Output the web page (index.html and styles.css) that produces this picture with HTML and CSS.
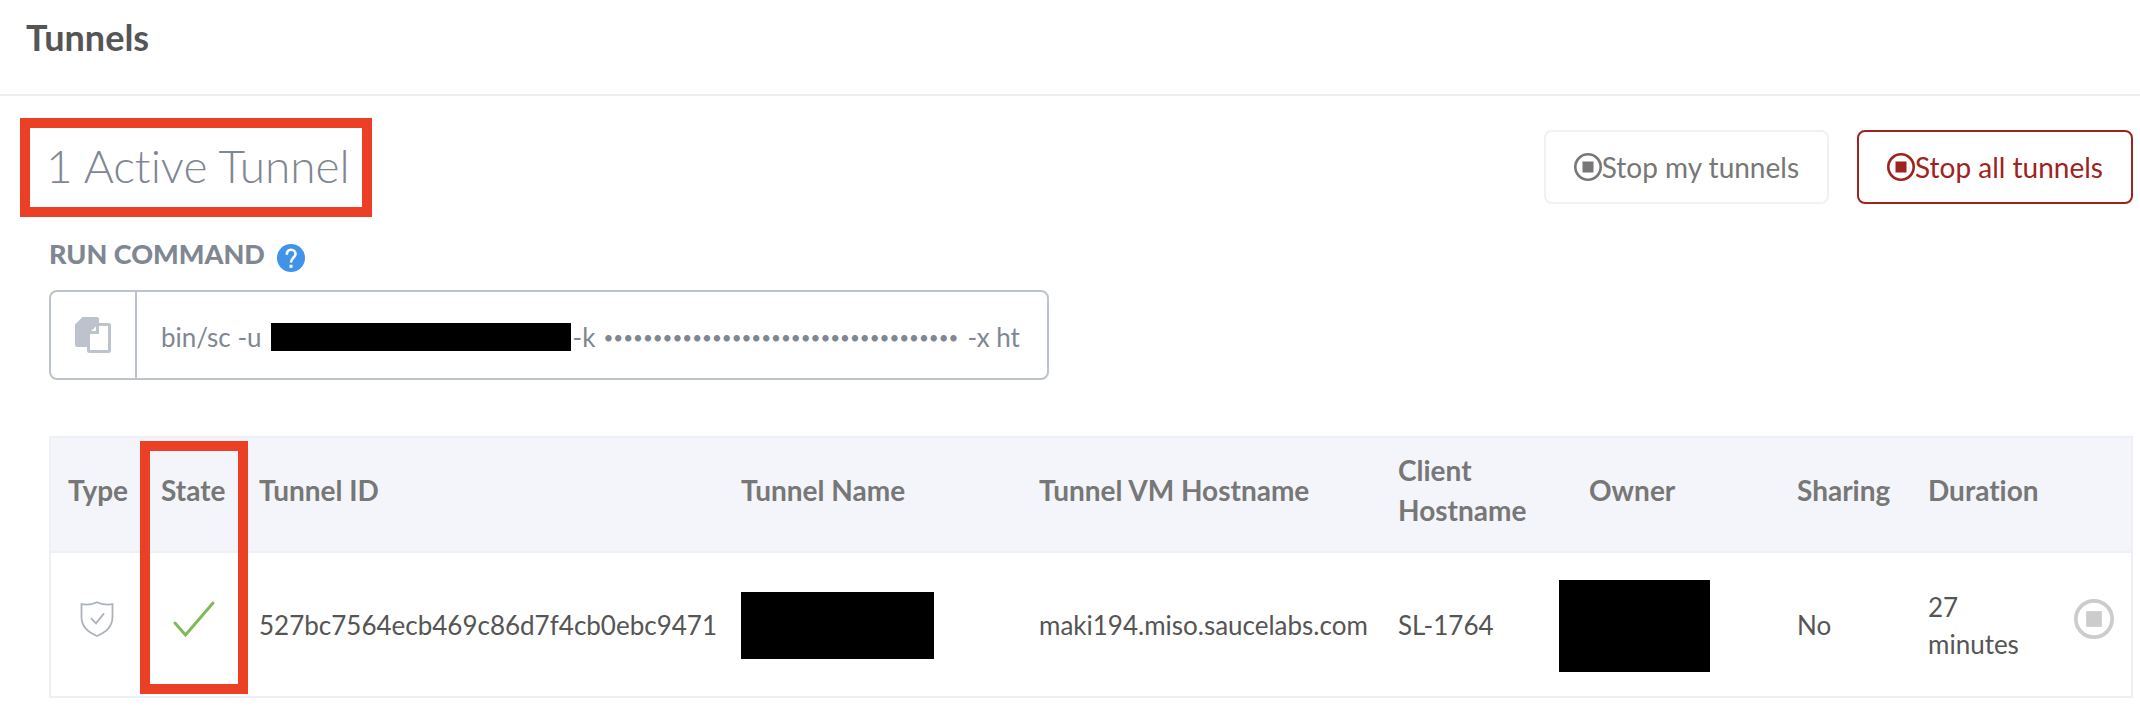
FILE: index.html
```html
<!DOCTYPE html>
<html lang="en">
<head>
<meta charset="utf-8">
<title>Tunnels</title>
<link rel="stylesheet" href="styles.css">
</head>
<body>
<svg class="sprite" aria-hidden="true">
  <symbol id="stop" viewBox="0 0 28 28">
    <circle cx="14" cy="14" r="12.7" fill="none" stroke="currentColor" stroke-width="2.6"/>
    <rect x="8.5" y="8.5" width="11" height="11" fill="currentColor"/>
  </symbol>
</svg>
<header class="page-header">
  <h1 class="page-title">Tunnels</h1>
</header>
<main class="content">
  <div class="summary">
    <h2 class="summary-title">1 Active Tunnel</h2>
    <div class="actions">
      <button class="button" type="button"><svg class="button-icon" aria-hidden="true"><use href="#stop"/></svg>Stop my tunnels</button>
      <button class="button button-danger" type="button"><svg class="button-icon" aria-hidden="true"><use href="#stop"/></svg>Stop all tunnels</button>
    </div>
  </div>
  <section class="command">
    <div class="command-heading">
      <h3 class="command-title">RUN COMMAND</h3>
      <button class="help" type="button" aria-label="Help">
        <svg class="help-icon" viewBox="0 0 28 28" aria-hidden="true">
          <circle cx="14" cy="14" r="14" fill="#3f94ea"/>
          <path d="M9.8 10.7C9.8 7.400 11.600 5.700 14 5.700s4.500 1.700 4.500 4.300c0 3.800-4.500 3.900-4.500 8.400" fill="none" stroke="#fff" stroke-width="2.600"/>
          <rect x="12.500" y="20.800" width="3" height="3" fill="#fff"/>
        </svg>
      </button>
    </div>
    <div class="command-box">
      <button class="copy" type="button" aria-label="Copy command">
        <svg class="copy-icon" viewBox="0 0 36 36" aria-hidden="true">
          <path d="M7.500 0H22a2 2 0 0 1 2 2V6h9.500A2.500 2.500 0 0 1 36 8.500v25A2.500 2.500 0 0 1 33.500 36h-19A2.500 2.500 0 0 1 12 33.500V30H2.500A2.500 2.500 0 0 1 0 27.500V7.500z" fill="#bcc3cc"/>
          <path d="M24 9h9v24H15V17h9z" fill="#fff"/>
          <path d="M16 14l5-4.500V14z" fill="#fff"/>
        </svg>
      </button>
      <div class="command-text"><span>bin/sc -u</span><span class="redacted redacted-user"></span><span>-k</span><span class="secret">••••••••••••••••••••••••••••••••••••</span><span>-x ht</span></div>
    </div>
  </section>
  <div class="table-wrap">
    <table class="tunnels">
      <colgroup><col class="col-type"><col class="col-state"><col class="col-id"><col class="col-name"><col class="col-vm"><col class="col-client"><col class="col-owner"><col class="col-sharing"><col class="col-duration"><col class="col-action"></colgroup>
      <thead>
        <tr><th class="type">Type</th><th>State</th><th>Tunnel ID</th><th>Tunnel Name</th><th>Tunnel VM Hostname</th><th>Client Hostname</th><th class="owner">Owner</th><th>Sharing</th><th>Duration</th><th></th></tr>
      </thead>
      <tbody>
        <tr>
          <td class="icon-cell">
            <svg class="shield-icon" viewBox="0 0 34 36" role="img" aria-label="Protected">
              <g fill="none" stroke="#adb3ba" stroke-width="1.800"><path d="M1.500 3.200C7 4.200 12 3.500 17 1.200c5 2.300 10 3 15.500 2V16c0 9.500-7 15.500-15.500 19C8.500 31.500 1.500 25.500 1.500 16z"/><path d="M11 17.200l5 5.200 8-10"/></g>
            </svg>
          </td>
          <td class="icon-cell">
            <svg class="check-icon" viewBox="0 0 44 38" role="img" aria-label="Running">
              <path d="M3 23l10.500 12L41 3" fill="none" stroke="#7fba57" stroke-width="3" stroke-linecap="round"/>
            </svg>
          </td>
          <td>527bc7564ecb469c86d7f4cb0ebc9471</td>
          <td><span class="redacted redacted-name"></span></td>
          <td>maki194.miso.saucelabs.com</td>
          <td>SL-1764</td>
          <td><span class="redacted redacted-owner"></span></td>
          <td>No</td>
          <td>27 minutes</td>
          <td class="icon-cell"><button class="stop" type="button" aria-label="Stop tunnel"><svg class="stop-icon" aria-hidden="true"><use href="#stop"/></svg></button></td>
        </tr>
      </tbody>
    </table>
    <div class="state-highlight"></div>
  </div>
</main>
</body>
</html>
```
FILE: styles.css
```css
* { box-sizing: border-box; }
body {
  margin: 0;
  background: #fff;
  color: #555;
  font-family: Lato, "Open Sans", sans-serif;
  font-size: 26px;
  font-variant-ligatures: none;
}
h1, h2, h3 { margin: 0; }
button {
  padding: 0;
  border: 0;
  background: none;
  color: inherit;
  font: inherit;
  font-variant-ligatures: none;
  cursor: pointer;
}
svg { display: block; flex: none; }
.sprite { position: absolute; width: 0; height: 0; }
.redacted { display: block; flex: none; background: #000; }

.page-header {
  padding: 17px 26px 37px;
  border-bottom: 2px solid #eee;
}
.page-title { font-size: 36px; font-weight: 700; line-height: 40px; }

.content { padding: 22px 7px 0 20px; }
.summary { display: flex; align-items: flex-start; justify-content: space-between; }
.summary-title {
  padding: 7px 12px 11px 16px;
  border: 10px solid #ec4026;
  color: #7f8792;
  font-size: 46px;
  font-weight: 300;
  line-height: 61px;
}
.actions { display: flex; gap: 28px; padding-top: 12px; }
.button {
  display: flex;
  align-items: center;
  height: 74px;
  padding: 0 28px;
  border: 2px solid #f1f1f1;
  border-radius: 8px;
  color: #777;
  font-size: 28px;
}
.button-danger { border-color: #9f231d; color: #9f231d; }
.button-icon { width: 28px; height: 28px; }

.command { padding: 22px 0 0 29px; }
.command-heading { display: flex; align-items: flex-start; gap: 12px; }
.command-title { color: #7f8792; font-size: 27px; font-weight: 900; line-height: 30px; }
.help-icon { width: 28px; height: 28px; margin-top: 5px; }
.command-box {
  display: flex;
  width: 1000px;
  max-width: 100%;
  height: 90px;
  margin-top: 18px;
  border: 2px solid #bcc3cc;
  border-radius: 8px;
  color: #7f8792;
}
.copy {
  display: flex;
  align-items: center;
  justify-content: center;
  width: 86px;
  border-right: 2px solid #bcc3cc;
}
.copy-icon { width: 36px; height: 36px; }
.command-text {
  display: flex;
  flex: 1;
  align-items: center;
  padding: 4px 24px 0;
  white-space: nowrap;
  overflow: hidden;
}
.redacted-user { width: 300px; height: 28px; margin: 0 2px 0 9px; }
.secret { margin: 0 9px 0 8px; font-size: 17px; }

.table-wrap { position: relative; margin: 56px 0 0 29px; }
.tunnels {
  width: 100%;
  border: 2px solid #eef0f5;
  border-collapse: collapse;
  table-layout: fixed;
}
.tunnels th, .tunnels td { padding: 0 12px; text-align: left; }
.tunnels th {
  height: 115px;
  padding-bottom: 10px;
  border-bottom: 2px solid #eef0f5;
  background: #f4f5fa;
  color: #777;
  font-size: 28px;
  font-weight: 700;
  line-height: 40px;
}
.tunnels th.type { padding-left: 17px; }
.tunnels th.owner { padding-left: 42px; }
.tunnels td { height: 145px; padding-top: 2px; line-height: 37px; }
.tunnels td.icon-cell { padding: 0 0 11px 23px; }
.col-type { width: 99px; }
.col-state { width: 98px; }
.col-id { width: 482px; }
.col-name { width: 298px; }
.col-client { width: 161px; }
.col-owner { width: 238px; }
.col-sharing { width: 131px; }
.col-duration { width: 135px; }
.col-action { width: 81px; }
.shield-icon { width: 34px; height: 36px; margin-left: 6px; }
.check-icon { width: 44px; height: 38px; }
.stop { display: block; color: #ccc; }
.stop-icon { width: 40px; height: 40px; }
.redacted-name { width: 193px; height: 67px; }
.redacted-owner { width: 151px; height: 92px; }
.state-highlight {
  position: absolute;
  top: 5px;
  bottom: 4px;
  left: 91px;
  width: 108px;
  border: 10px solid #ec4026;
  pointer-events: none;
}
```
